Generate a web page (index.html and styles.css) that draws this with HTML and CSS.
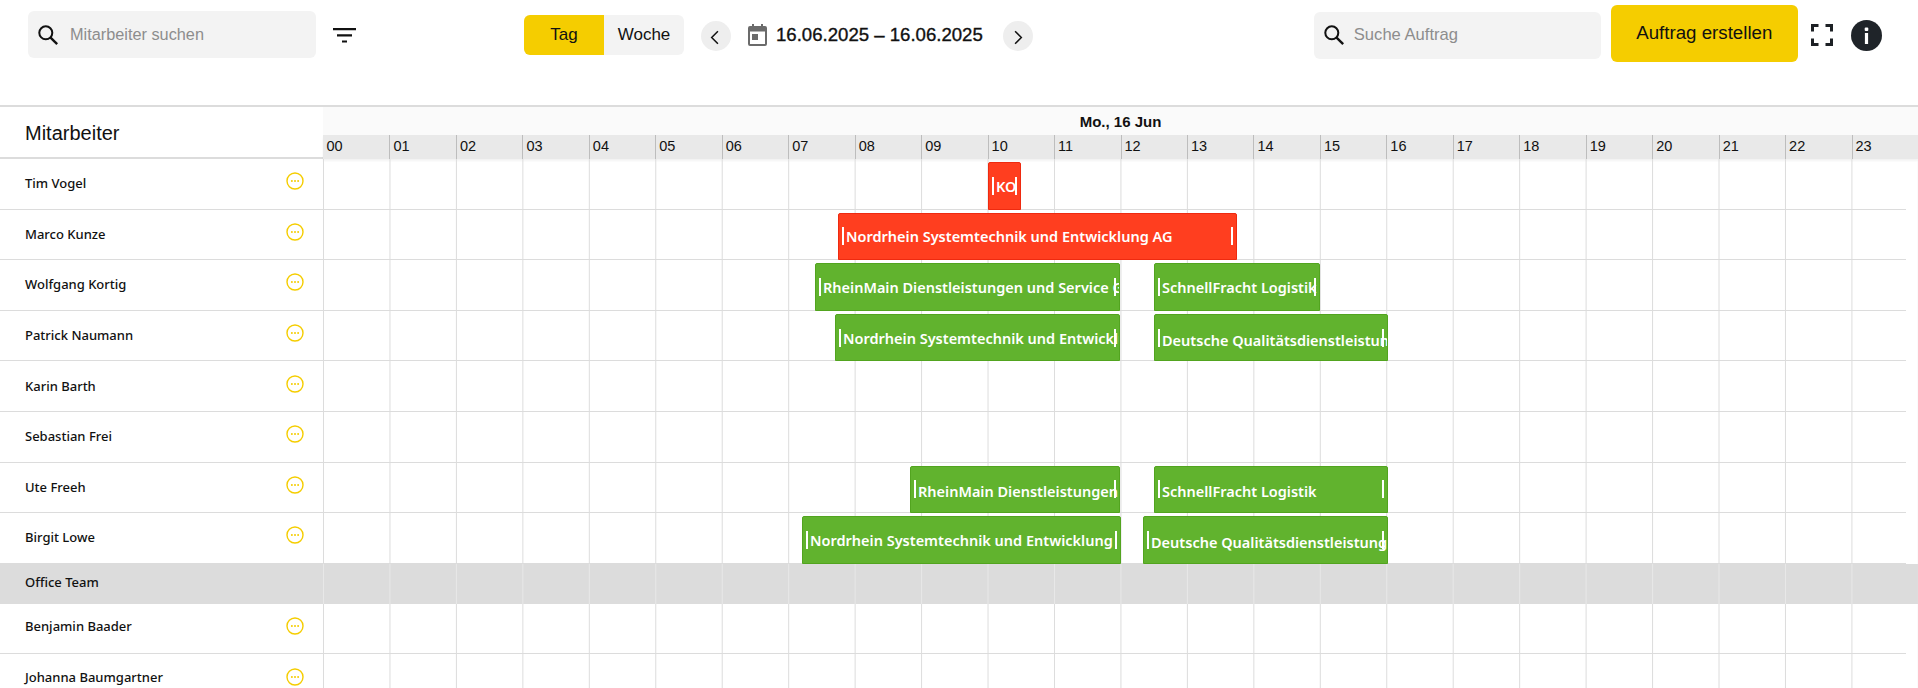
FILE: index.html
```html
<!DOCTYPE html>
<html lang="de">
<head>
<meta charset="utf-8">
<title>Einsatzplan</title>
<link rel="stylesheet" href="styles.css">
</head>
<body>
<svg class="defs" width="0" height="0" aria-hidden="true">
  <symbol id="i-search" viewBox="0 0 24 24"><circle cx="9.6" cy="9.6" r="7.1" fill="none" stroke="currentColor" stroke-width="2.2"/><path d="M14.8 14.8 22 22" fill="none" stroke="currentColor" stroke-width="2.6"/></symbol>
  <symbol id="i-dots" viewBox="0 0 18 18"><circle cx="9" cy="9" r="8" fill="none" stroke="#f5cd00" stroke-width="1.4"/><circle cx="5.9" cy="9" r="1" fill="#f5cd00"/><circle cx="9" cy="9" r="1" fill="#f5cd00"/><circle cx="12.1" cy="9" r="1" fill="#f5cd00"/></symbol>
</svg>
<header class="topbar">
  <div class="search search-staff">
    <svg class="search-icon"><use href="#i-search"/></svg>
    <span class="placeholder">Mitarbeiter suchen</span>
  </div>
  <svg class="filter-icon" viewBox="0 0 23 15"><path d="M0 0h23v2.200H0zM4 6.200h15v2.200H4zM9 12.400h5v2.200H9z" fill="#111"/></svg>
  <div class="segment">
    <span class="seg seg-active">Tag</span>
    <span class="seg">Woche</span>
  </div>
  <button class="round prev" aria-label="Zurück"><svg viewBox="0 0 12 18" width="10" height="15"><path d="M9.500 1.500 2 9l7.500 7.500" fill="none" stroke="#111" stroke-width="1.800"/></svg></button>
  <svg class="cal-icon" viewBox="0 0 19 22"><path d="M4 0h2v2h7V0h2v2h2a2 2 0 0 1 2 2v16a2 2 0 0 1-2 2H2a2 2 0 0 1-2-2V4a2 2 0 0 1 2-2h2zM2 7.500V20h15V7.500z" fill="#6b6b6b"/><rect x="4" y="10" width="6" height="6" fill="#6b6b6b"/></svg>
  <span class="range">16.06.2025 – 16.06.2025</span>
  <button class="round next" aria-label="Weiter"><svg viewBox="0 0 12 18" width="10" height="15"><path d="M2.500 1.500 10 9l-7.500 7.500" fill="none" stroke="#111" stroke-width="1.800"/></svg></button>
  <div class="search search-order">
    <svg class="search-icon"><use href="#i-search"/></svg>
    <span class="placeholder">Suche Auftrag</span>
  </div>
  <button class="create">Auftrag erstellen</button>
  <svg class="full-icon" viewBox="0 0 22 22"><path d="M1.500 7.500v-6h6M14.500 1.500h6v6M20.500 14.500v6h-6M7.500 20.500h-6v-6" fill="none" stroke="#1d2125" stroke-width="3"/></svg>
  <svg class="info-icon" viewBox="0 0 31 31"><circle cx="15.500" cy="15.500" r="15.500" fill="#1f2429"/><rect x="13.700" y="7.500" width="3.600" height="3.600" rx="1" fill="#fff"/><rect x="13.900" y="13" width="3.200" height="11" fill="#fff"/></svg>
</header>

<main class="plan">
  <div class="head">
    <div class="head-left">Mitarbeiter</div>
    <div class="head-right">
      <div class="day">Mo., 16 Jun</div>
      <div class="hours">
        <span>00</span><span>01</span><span>02</span><span>03</span><span>04</span><span>05</span><span>06</span><span>07</span><span>08</span><span>09</span><span>10</span><span>11</span><span>12</span><span>13</span><span>14</span><span>15</span><span>16</span><span>17</span><span>18</span><span>19</span><span>20</span><span>21</span><span>22</span><span>23</span>
      </div>
    </div>
  </div>

  <div class="row">
    <div class="who"><span>Tim Vogel</span><svg class="dots"><use href="#i-dots"/></svg></div>
    <div class="track">
      <div class="bar red" style="left:665px;width:33px">KO</div>
    </div>
  </div>
  <div class="row">
    <div class="who"><span>Marco Kunze</span><svg class="dots"><use href="#i-dots"/></svg></div>
    <div class="track">
      <div class="bar red" style="left:515px;width:399px">Nordrhein Systemtechnik und Entwicklung AG</div>
    </div>
  </div>
  <div class="row">
    <div class="who"><span>Wolfgang Kortig</span><svg class="dots"><use href="#i-dots"/></svg></div>
    <div class="track">
      <div class="bar green" style="left:492px;width:305px">RheinMain Dienstleistungen und Service GmbH</div>
      <div class="bar green" style="left:831px;width:166px">SchnellFracht Logistik</div>
    </div>
  </div>
  <div class="row">
    <div class="who"><span>Patrick Naumann</span><svg class="dots"><use href="#i-dots"/></svg></div>
    <div class="track">
      <div class="bar green" style="left:512px;width:285px">Nordrhein Systemtechnik und Entwicklung AG</div>
      <div class="bar green low" style="left:831px;width:234px">Deutsche Qualitätsdienstleistung GmbH</div>
    </div>
  </div>
  <div class="row">
    <div class="who"><span>Karin Barth</span><svg class="dots"><use href="#i-dots"/></svg></div>
    <div class="track"></div>
  </div>
  <div class="row">
    <div class="who"><span>Sebastian Frei</span><svg class="dots"><use href="#i-dots"/></svg></div>
    <div class="track"></div>
  </div>
  <div class="row">
    <div class="who"><span>Ute Freeh</span><svg class="dots"><use href="#i-dots"/></svg></div>
    <div class="track">
      <div class="bar green low" style="left:587px;width:210px">RheinMain Dienstleistungen und Service GmbH</div>
      <div class="bar green low" style="left:831px;width:234px">SchnellFracht Logistik</div>
    </div>
  </div>
  <div class="row">
    <div class="who"><span>Birgit Lowe</span><svg class="dots"><use href="#i-dots"/></svg></div>
    <div class="track">
      <div class="bar green" style="left:479px;width:319px">Nordrhein Systemtechnik und Entwicklung</div>
      <div class="bar green low" style="left:820px;width:245px">Deutsche Qualitätsdienstleistung</div>
    </div>
  </div>
  <div class="row group">
    <div class="who"><span>Office Team</span></div>
    <div class="track"></div>
  </div>
  <div class="row">
    <div class="who raised"><span>Benjamin Baader</span><svg class="dots"><use href="#i-dots"/></svg></div>
    <div class="track"></div>
  </div>
  <div class="row">
    <div class="who raised"><span>Johanna Baumgartner</span><svg class="dots"><use href="#i-dots"/></svg></div>
    <div class="track"></div>
  </div>
</main>
</body>
</html>
```

FILE: styles.css
```css
* { box-sizing: border-box; }
html, body { height: 688px; overflow: hidden; }
body { margin: 0; background: #fff; color: #111; font-family: "Liberation Sans", Arial, sans-serif; }
.defs { position: absolute; }
button { border: 0; padding: 0; font: inherit; color: inherit; }

.topbar { display: flex; align-items: center; height: 105px; padding: 0 0 35px 28px; }
.search { display: flex; align-items: center; background: #f3f3f3; border-radius: 6px; }
.search-staff { width: 288px; height: 47px; padding-left: 9px; margin-top: -1px; }
.search-order { width: 287px; height: 47px; padding-left: 9px; margin-left: 281px; }
.search-icon { width: 22px; height: 22px; color: #111; flex: none; }
.placeholder { margin-left: 11px; font-size: 16.3px; color: #8d8d8d; }
.search-order .placeholder { margin-left: 9px; font-size: 16.6px; }
.filter-icon { width: 23px; height: 15px; margin-left: 17px; flex: none; }
.segment { display: flex; margin-left: 168px; height: 40px; border-radius: 6px; overflow: hidden; background: #f3f3f3; }
.seg { display: flex; align-items: center; justify-content: center; width: 80px; font-size: 17px; }
.seg-active { background: #f5cd00; }
.round { display: flex; align-items: center; justify-content: center; width: 30px; height: 30px; border-radius: 50%; background: #eee; flex: none; }
.round svg { margin-top: 3px; }
.prev { margin-left: 17px; margin-top: 1px; padding-right: 3px; }
.next { margin-left: 20px; margin-top: 1px; }
.cal-icon { width: 19px; height: 22px; margin-left: 17px; flex: none; }
.range { margin-left: 9px; font-size: 18.6px; font-weight: 400; -webkit-text-stroke: .35px #111; white-space: nowrap; }
.create { width: 187px; height: 57px; margin-left: 10px; margin-top: -4px; border-radius: 6px; background: #f5cd00; font-size: 18.7px; color: #111; }
.full-icon { width: 22px; height: 22px; margin-left: 13px; flex: none; }
.info-icon { width: 31px; height: 31px; margin-left: 18px; flex: none; }

.plan { border-top: 2px solid #dcdcdc; }
.head { display: flex; height: 52px; }
.head-left { width: 323px; flex: none; display: flex; align-items: center; padding: 3px 0 0 25px; font-size: 20px; border-bottom: 2px solid #dcdcdc; }
.head-right { flex: 1; min-width: 0; display: flex; flex-direction: column; }
.day { height: 28px; display: flex; align-items: center; justify-content: center; font-size: 15px; font-weight: 700; background: #fafafa; }
.hours { display: grid; grid-template-columns: repeat(24, 1fr); height: 24px; background: #e9e9e9; box-shadow: 0 2px 2px rgba(0,0,0,.05); }
.hours span { padding-left: 3px; font-size: 14.5px; line-height: 22px; border-left: 1px solid #bdbdbd; }
.hours span:first-child { border-left: 0; padding-left: 3.5px; }

.row { display: flex; height: 50.6px; }
.who { width: 323px; flex: none; display: flex; align-items: center; justify-content: space-between; padding: 0 19px 1px 25px; border-bottom: 1px solid #dcdcdc; font-family: "Noto Sans", sans-serif; font-size: 13px; font-weight: 500; color: #111; }
.raised { padding-bottom: 5px; }
.dots { width: 18px; height: 18px; margin-top: -4px; }
.raised .dots { margin-top: 0; }
.track { position: relative; flex: 1; min-width: 0; background-image: linear-gradient(to right, #dcdcdc 1px, transparent 1px); background-size: calc(100% / 24) 100%; }
.track::after { content: ""; position: absolute; left: 0; right: 12px; bottom: 0; height: 1px; background: #dcdcdc; }
.group { height: 40px; background: #dcdcdc; }
.group .who { border-bottom: 0; padding-bottom: 4px; }
.group .track::after { display: none; }
.group .track { background-image: linear-gradient(to right, #e8e8e8 1px, transparent 1px); }

.bar { position: absolute; top: 3px; bottom: 0; z-index: 1; display: flex; align-items: center; padding-left: 7px; overflow: hidden; white-space: nowrap; border-radius: 2px 2px 0 0; border: 1px solid; font-family: "Noto Sans", sans-serif; font-size: 14.5px; font-weight: 600; color: #fff; }
.bar::before, .bar::after { content: ""; position: absolute; top: 50%; width: 2px; height: 18px; margin-top: -9px; background: #fff; }
.bar::before { left: 3px; }
.bar::after { right: 3px; }
.low { padding-top: 4px; }
.red { background: #ff3e1f; border-color: #ee2a10; }
.green { background: #61b32e; border-color: #52a41f; }
```
